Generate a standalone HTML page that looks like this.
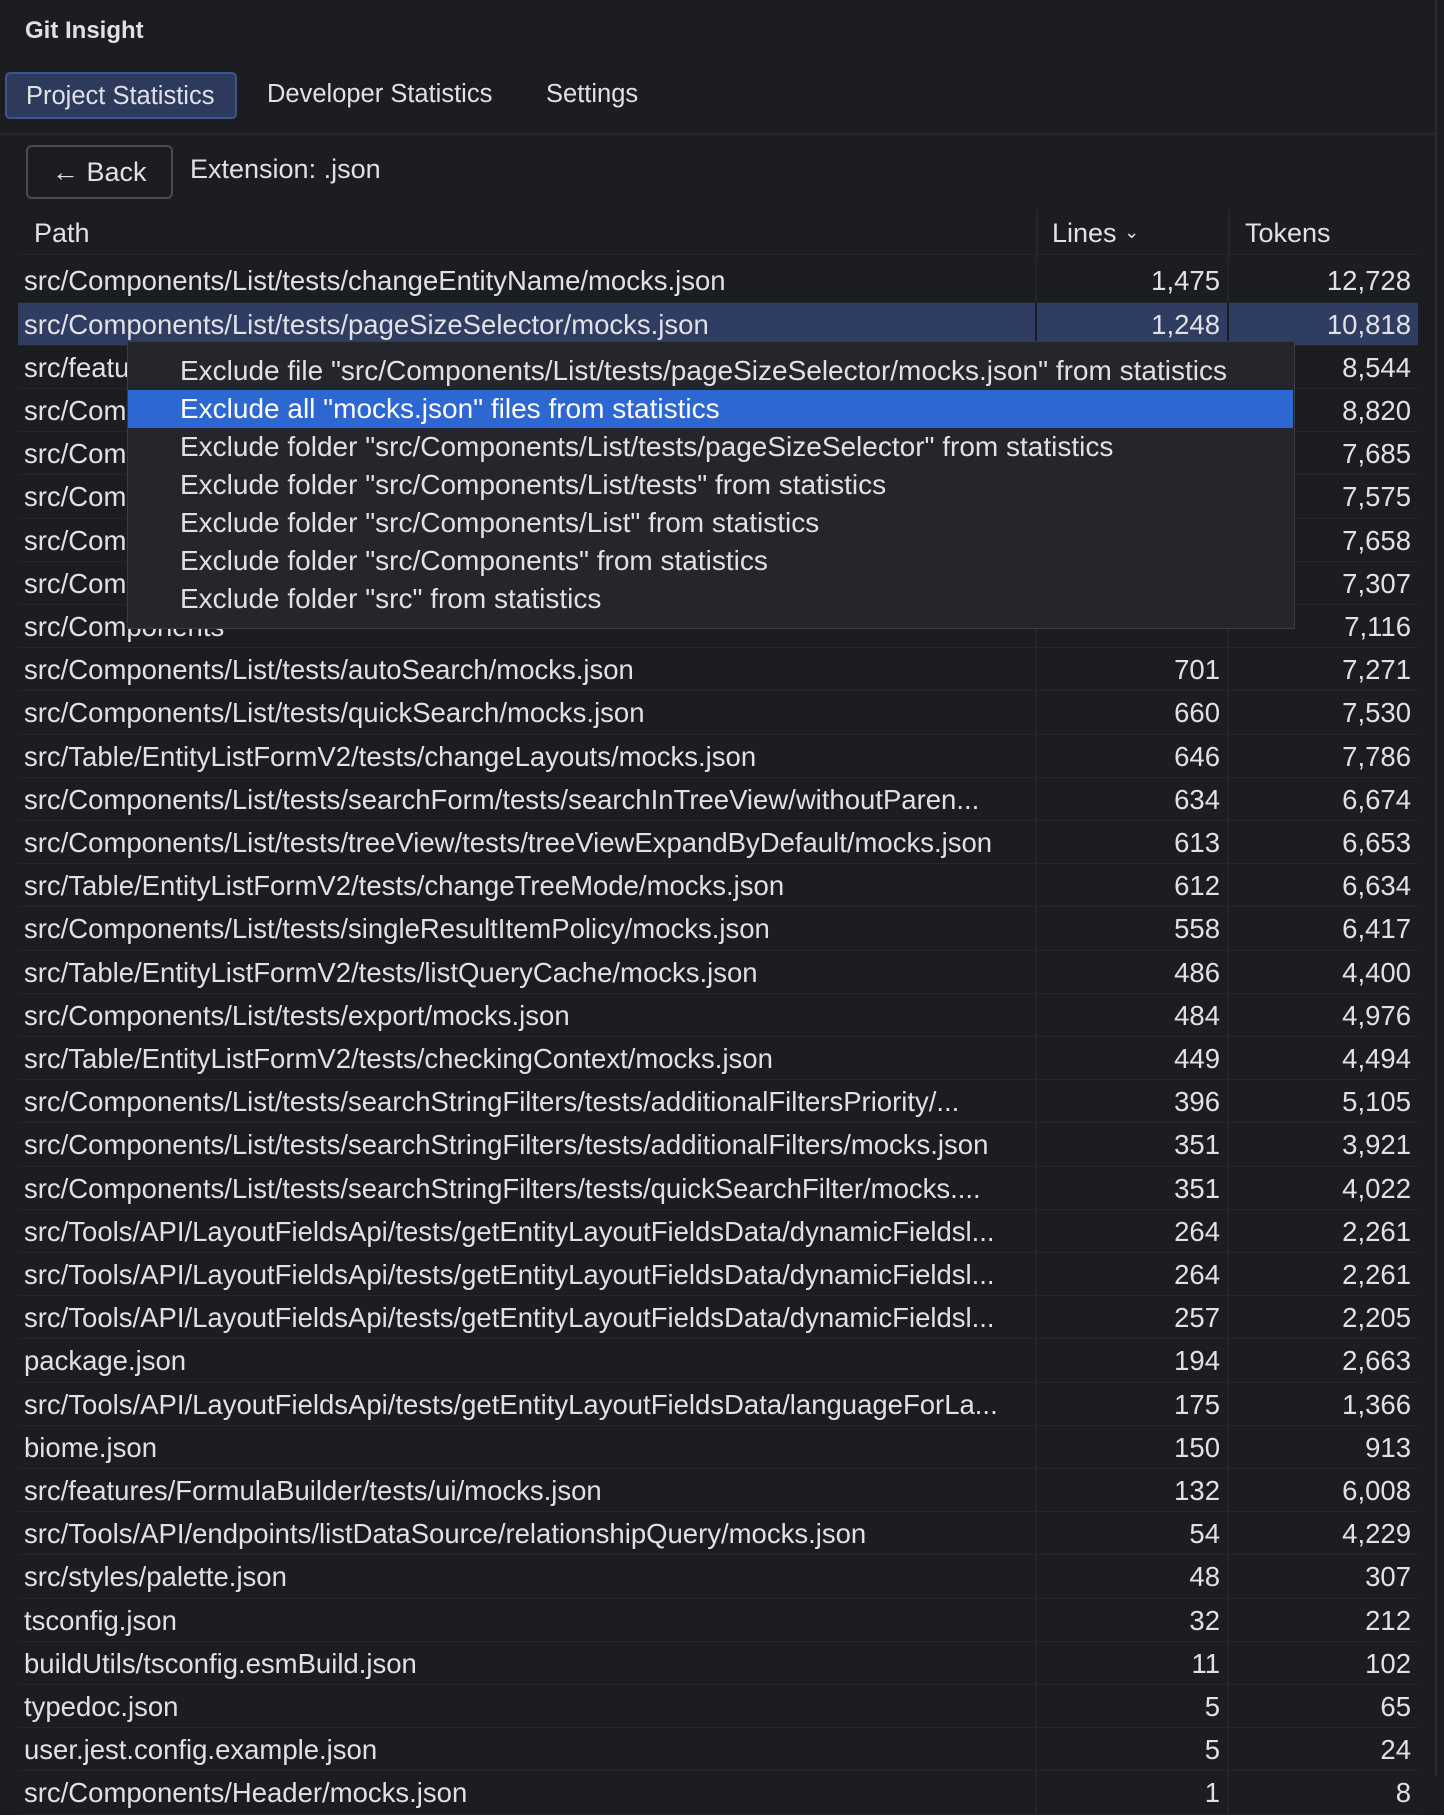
<!DOCTYPE html>
<html><head><meta charset="utf-8"><style>
*{margin:0;padding:0;box-sizing:border-box}
body{width:1444px;height:1776px;background:#1c1d20;font-family:"Liberation Sans",sans-serif;color:#dfe1e5;position:relative;overflow:hidden}
.a{position:absolute;white-space:nowrap}
.title{left:25px;top:17px;font-size:24px;font-weight:bold}
.tab{top:72px;height:47px;line-height:45px;font-size:25.5px;padding:0 19px}
.tab.act{left:5px;width:232px;background:#2d3a5c;border:2px solid #3b5591;border-radius:5px}
.sep{left:0;top:133px;width:1436px;height:2px;background:#26272b}
.back{left:26px;top:145px;width:147px;height:54px;border:2px solid #4a4c52;border-radius:6px;font-size:27px;line-height:50px;padding-left:24px}
.row{position:absolute;left:18px;width:1400px;height:43.2px;border-bottom:1.5px solid #25262a;font-size:27.5px;line-height:43px}
.row .p{position:absolute;left:6px}
.row .l{position:absolute;right:198px;width:120px;text-align:right}
.row .t{position:absolute;right:7px;width:150px;text-align:right}
.row.sel{background:#2f3d63}
.vl{position:absolute;width:2px;background:#25262a}
.menu{left:127px;top:341px;width:1168px;height:288px;background:#25262b;border:1.5px solid #3c3d42;font-size:28px}
.mi{position:absolute;left:0;width:1165px;height:38px;line-height:38px;padding-left:52px}
.mi.h{background:#2d67d1;color:#fff}
</style></head><body>
<div class="a title">Git Insight</div>
<div class="a tab act">Project Statistics</div>
<div class="a tab" style="left:248px">Developer Statistics</div>
<div class="a tab" style="left:527px">Settings</div>
<div class="a sep"></div>
<div class="a back">← Back</div>
<div class="a" style="left:190px;top:154px;font-size:27px">Extension: .json</div>
<div class="row" style="top:212px;font-size:27px"><span class="p" style="left:16px">Path</span><span style="position:absolute;left:1034px">Lines <span style="font-size:18px;position:relative;top:-4px">&#8964;</span></span><span style="position:absolute;left:1227px">Tokens</span></div>
<div class="vl" style="left:1036px;top:210px;height:48px"></div>
<div class="vl" style="left:1228px;top:210px;height:48px"></div>
<div style="position:absolute;left:1435px;top:0;width:2px;height:1776px;background:#2a2b2f"></div>
<div id="rows"></div>
<script>
const d=[["src/Components/List/tests/changeEntityName/mocks.json","1,475","12,728"],
["src/Components/List/tests/pageSizeSelector/mocks.json","1,248","10,818"],
["src/features","","8,544"],["src/Components","","8,820"],["src/Components","","7,685"],["src/Components","","7,575"],["src/Components","","7,658"],["src/Components","","7,307"],["src/Components","","7,116"],
["src/Components/List/tests/autoSearch/mocks.json","701","7,271"],
["src/Components/List/tests/quickSearch/mocks.json","660","7,530"],
["src/Table/EntityListFormV2/tests/changeLayouts/mocks.json","646","7,786"],
["src/Components/List/tests/searchForm/tests/searchInTreeView/withoutParen...","634","6,674"],
["src/Components/List/tests/treeView/tests/treeViewExpandByDefault/mocks.json","613","6,653"],
["src/Table/EntityListFormV2/tests/changeTreeMode/mocks.json","612","6,634"],
["src/Components/List/tests/singleResultItemPolicy/mocks.json","558","6,417"],
["src/Table/EntityListFormV2/tests/listQueryCache/mocks.json","486","4,400"],
["src/Components/List/tests/export/mocks.json","484","4,976"],
["src/Table/EntityListFormV2/tests/checkingContext/mocks.json","449","4,494"],
["src/Components/List/tests/searchStringFilters/tests/additionalFiltersPriority/...","396","5,105"],
["src/Components/List/tests/searchStringFilters/tests/additionalFilters/mocks.json","351","3,921"],
["src/Components/List/tests/searchStringFilters/tests/quickSearchFilter/mocks....","351","4,022"],
["src/Tools/API/LayoutFieldsApi/tests/getEntityLayoutFieldsData/dynamicFieldsl...","264","2,261"],
["src/Tools/API/LayoutFieldsApi/tests/getEntityLayoutFieldsData/dynamicFieldsl...","264","2,261"],
["src/Tools/API/LayoutFieldsApi/tests/getEntityLayoutFieldsData/dynamicFieldsl...","257","2,205"],
["package.json","194","2,663"],
["src/Tools/API/LayoutFieldsApi/tests/getEntityLayoutFieldsData/languageForLa...","175","1,366"],
["biome.json","150","913"],
["src/features/FormulaBuilder/tests/ui/mocks.json","132","6,008"],
["src/Tools/API/endpoints/listDataSource/relationshipQuery/mocks.json","54","4,229"],
["src/styles/palette.json","48","307"],["tsconfig.json","32","212"],
["buildUtils/tsconfig.esmBuild.json","11","102"],["typedoc.json","5","65"],
["user.jest.config.example.json","5","24"],["src/Components/Header/mocks.json","1","8"]];
let h="";d.forEach((r,i)=>{const t=259.4+i*43.2;
h+=`<div class="row${i==1?' sel':''}" style="top:${t}px"><span class="p">${r[0]}</span><span class="l">${r[1]}</span><span class="t">${r[2]}</span></div>`;
h+=`<div class="vl" style="left:1035px;top:${t}px;height:43px;background:${i==1?'#1c1d20':'#25262a'}"></div><div class="vl" style="left:1227px;top:${t}px;height:43px;background:${i==1?'#1c1d20':'#25262a'}"></div>`;});
document.getElementById("rows").innerHTML=h;
</script>
<div class="a menu">
<div class="mi" style="top:10px">Exclude file "src/Components/List/tests/pageSizeSelector/mocks.json" from statistics</div>
<div class="mi h" style="top:48px">Exclude all "mocks.json" files from statistics</div>
<div class="mi" style="top:86px">Exclude folder "src/Components/List/tests/pageSizeSelector" from statistics</div>
<div class="mi" style="top:124px">Exclude folder "src/Components/List/tests" from statistics</div>
<div class="mi" style="top:162px">Exclude folder "src/Components/List" from statistics</div>
<div class="mi" style="top:200px">Exclude folder "src/Components" from statistics</div>
<div class="mi" style="top:238px">Exclude folder "src" from statistics</div>
</div>
</body></html>
